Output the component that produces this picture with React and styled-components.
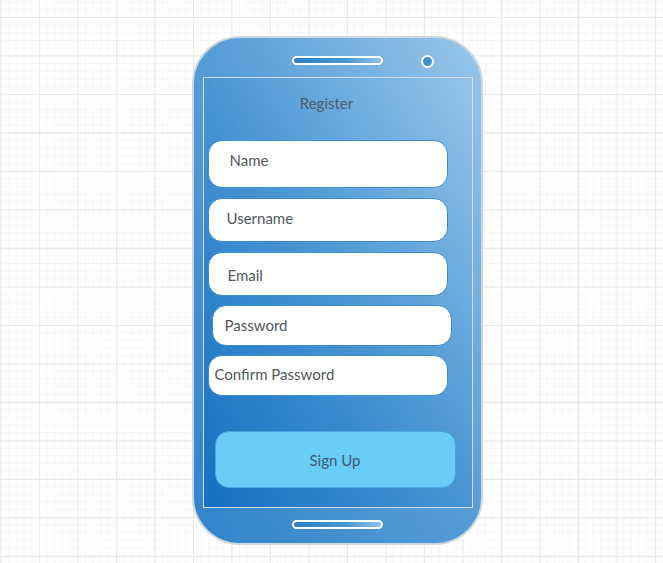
import React from 'react';
import styled, { createGlobalStyle } from 'styled-components';

const GlobalStyle = createGlobalStyle`
html, body {
  margin: 0;
  padding: 0;
}
body {
  width: 663px;
  height: 563px;
  overflow: hidden;
  font-family: 'Lato', 'Liberation Sans', sans-serif;
  background-color: #ffffff;
  background-image:
    linear-gradient(to right, #e9e9e9 1px, transparent 1px),
    linear-gradient(to bottom, #e9e9e9 1px, transparent 1px),
    linear-gradient(to right, #f6f6f6 1px, transparent 1px),
    linear-gradient(to bottom, #f6f6f6 1px, transparent 1px);
  background-size: 38.5px 38.5px, 38.5px 38.5px, 7.7px 7.7px, 7.7px 7.7px;
  background-position: 0.5px 0, 0 17px, 0.5px 0, 0 1.6px;
}
`

// whole drawing area
const Canvas = styled.div`
padding: 36px 0 0 192px;
`

// phone body
const Phone = styled.div`
box-sizing: border-box;
width: 291px;
height: 509px;
border-radius: 48px;
border: 2px solid #cdd7df;
background: linear-gradient(to top right, #2f84c9 0%, #5a9fd8 55%, #98c6ea 100%);
display: flex;
flex-direction: column;
align-items: center;
`

const TopBar = styled.div`
position: relative;
width: 100%;
height: 39px;
display: flex;
justify-content: center;
padding-top: 18px;
box-sizing: border-box;
`

const Speaker = styled.div`
box-sizing: border-box;
width: 91px;
height: 9px;
border-radius: 5px;
border: 2px solid #ffffff;
background: linear-gradient(to right, #2b7fc6, #4a97d4 60%, #8cc2ea);
`

const Camera = styled.div`
position: absolute;
top: 17px;
left: 227px;
box-sizing: border-box;
width: 13px;
height: 13px;
border-radius: 50%;
border: 2px solid #ffffff;
background: #3f8fd0;
`

// the screen inside the phone
const Screen = styled.div`
box-sizing: border-box;
width: 270px;
height: 431px;
border: 1px solid #d3dde6;
background: linear-gradient(to top right, #1370c1 0%, #4995d3 50%, #95c5ea 100%);
display: flex;
flex-direction: column;
padding: 0 0 0 4px;
`

const Title = styled.div`
text-align: center;
color: #4a5d70;
font-size: 15px;
line-height: 18px;
margin: 16px 0 0 -4px;
padding-right: 22px;
height: 46px;
`

const Field = styled.div`
box-sizing: border-box;
width: 240px;
height: ${p => p.h}px;
margin-left: ${p => p.x}px;
margin-bottom: ${p => p.gap}px;
padding: ${p => p.top}px 0 0 ${p => p.left}px;
border-radius: 14px;
border: 1px solid #3a8ccf;
background: #ffffff;
color: #52575d;
font-size: 15px;
line-height: 18px;
`

const SignUp = styled.button`
box-sizing: border-box;
width: 241px;
height: 57px;
margin: 0 0 0 ${p => p.x}px;
border-radius: 14px;
border: 1px solid #4aa6de;
background: #6acdf6;
color: #3d5a78;
font-family: 'Lato', 'Liberation Sans', sans-serif;
font-size: 15px;
cursor: pointer;
`

const BottomBar = styled.div`
padding-top: 12px;
`

const fields = [
    { label: 'Name', h: 48, x: 0, gap: 10, top: 10, left: 21 },
    { label: 'Username', h: 44, x: 0, gap: 10, top: 10, left: 18 },
    { label: 'Email', h: 44, x: 0, gap: 9, top: 13, left: 19 },
    { label: 'Password', h: 41, x: 4, gap: 9, top: 10, left: 12 },
    { label: 'Confirm Password', h: 41, x: 0, gap: 35, top: 9, left: 6 },
]

const App = () => {
    return (
        <>
            <GlobalStyle />
            <Canvas>
                <Phone>
                    <TopBar>
                        <Speaker />
                        <Camera />
                    </TopBar>
                    <Screen>
                        <Title>Register</Title>
                        {fields.map(f => (
                            <Field key={f.label} h={f.h} x={f.x} gap={f.gap} top={f.top} left={f.left}>
                                {f.label}
                            </Field>
                        ))}
                        <SignUp x={7}>Sign Up</SignUp>
                    </Screen>
                    <BottomBar>
                        <Speaker />
                    </BottomBar>
                </Phone>
            </Canvas>
        </>
    )
}

export default App
